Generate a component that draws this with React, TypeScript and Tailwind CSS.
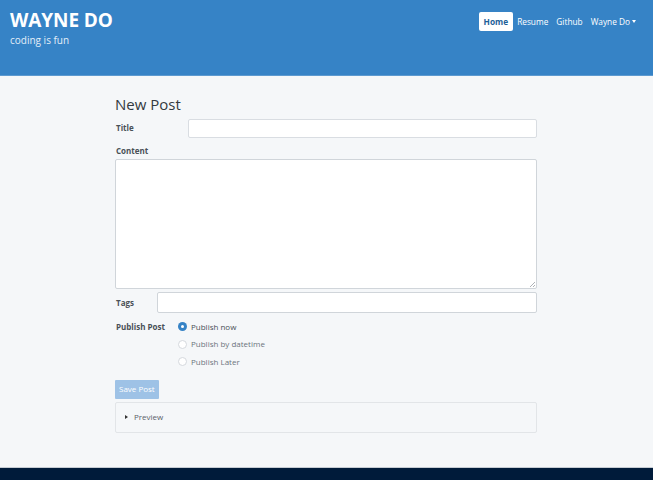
import React from "react";

const Radio = ({ checked, label }: { checked?: boolean; label: string }) => (
  <label className="flex items-center gap-[4px] h-[17.5px]">
    {checked ? (
      <span className="w-[9px] h-[9px] rounded-full bg-[#3683c6] flex items-center justify-center">
        <span className="w-[3px] h-[3px] rounded-full bg-white" />
      </span>
    ) : (
      <span className="w-[9px] h-[9px] rounded-full border border-[#d5d9de] bg-white" />
    )}
    <span className={checked ? "text-[#495057]" : "text-[#6c757d]"}>{label}</span>
  </label>
);

export default function App() {
  return (
    <div className="w-[653px] h-[480px] flex flex-col bg-[#f5f7f9] overflow-hidden" style={{ fontFamily: '"Open Sans", "Noto Sans", sans-serif' }}>
      <header className="h-[76px] shrink-0 bg-[#3683c6] flex justify-between px-[10px] border-b border-[#5d9ad0]">
        <div className="pt-[7px]">
          <h1 className="text-white font-bold text-[19px] leading-[26px] tracking-[-0.1px]">WAYNE DO</h1>
          <p className="text-[#e3eef8] text-[10px] leading-[14px]">coding is fun</p>
        </div>
        <nav className="flex items-start pt-[12px] pr-[3px] text-[8.3px] text-white">
          <a className="bg-white text-[#1d5f98] font-bold px-[5px] h-[19px] leading-[19px] rounded-[2px]">Home</a>
          <a className="px-[4px] h-[19px] leading-[19px]">Resume</a>
          <a className="px-[4px] h-[19px] leading-[19px]">Github</a>
          <a className="px-[4px] h-[19px] leading-[19px] flex items-center gap-[2px]">
            Wayne Do
            <span className="inline-block w-0 h-0 border-l-[2.5px] border-r-[2.5px] border-t-[3px] border-l-transparent border-r-transparent border-t-white" />
          </a>
        </nav>
      </header>

      <main className="flex-1 pl-[115px] pr-[116px] pt-[18px]">
        <h2 className="text-[#333a40] text-[15px] leading-[20px] mb-[4px]">New Post</h2>

        <div className="flex items-center text-[8px] font-bold text-[#495057] h-[20px]">
          <span className="w-[73px] pl-[1px]">Title</span>
          <div className="flex-1 h-[19px] bg-white border border-[#d9dde2] rounded-[2px]" />
        </div>

        <div className="text-[8px] font-bold text-[#495057] mt-[8px] mb-[3px] pl-[1px] leading-[10px]">Content</div>
        <div className="relative h-[130px] bg-white border border-[#d0d5da] rounded-[2px]">
          <svg className="absolute right-[1px] bottom-[1px]" width="6" height="6" viewBox="0 0 6 6">
            <path d="M6 1 L1 6 M6 4 L4 6" stroke="#9aa0a6" strokeWidth="0.8" />
          </svg>
        </div>

        <div className="flex items-center mt-[3px] h-[21px] text-[8px] font-bold text-[#495057]">
          <span className="w-[42px] pl-[1px]">Tags</span>
          <div className="flex-1 h-[21px] bg-white border border-[#d0d5da] rounded-[2px]" />
        </div>

        <div className="flex mt-[5px] text-[8px]">
          <span className="w-[63px] font-bold text-[#495057] h-[17.5px] flex items-center pl-[1px]">Publish Post</span>
          <div className="flex flex-col">
            <Radio checked label="Publish now" />
            <Radio label="Publish by datetime" />
            <Radio label="Publish Later" />
          </div>
        </div>

        <button className="mt-[9px] h-[19px] px-[4px] bg-[#9ec2e6] text-white text-[8px] rounded-[1px]">Save Post</button>

        <div className="mt-[3px] h-[31px] border border-[#e2e5e8] rounded-[2px] flex items-center pl-[9px] gap-[6px] text-[8px] text-[#5a6169]">
          <span className="inline-block w-0 h-0 border-t-[2.5px] border-b-[2.5px] border-l-[3px] border-t-transparent border-b-transparent border-l-[#333]" />
          Preview
        </div>
      </main>

      <footer className="h-[13px] shrink-0 bg-[#001b3a] border-t border-[#c6ccd3]" />
    </div>
  );
}
